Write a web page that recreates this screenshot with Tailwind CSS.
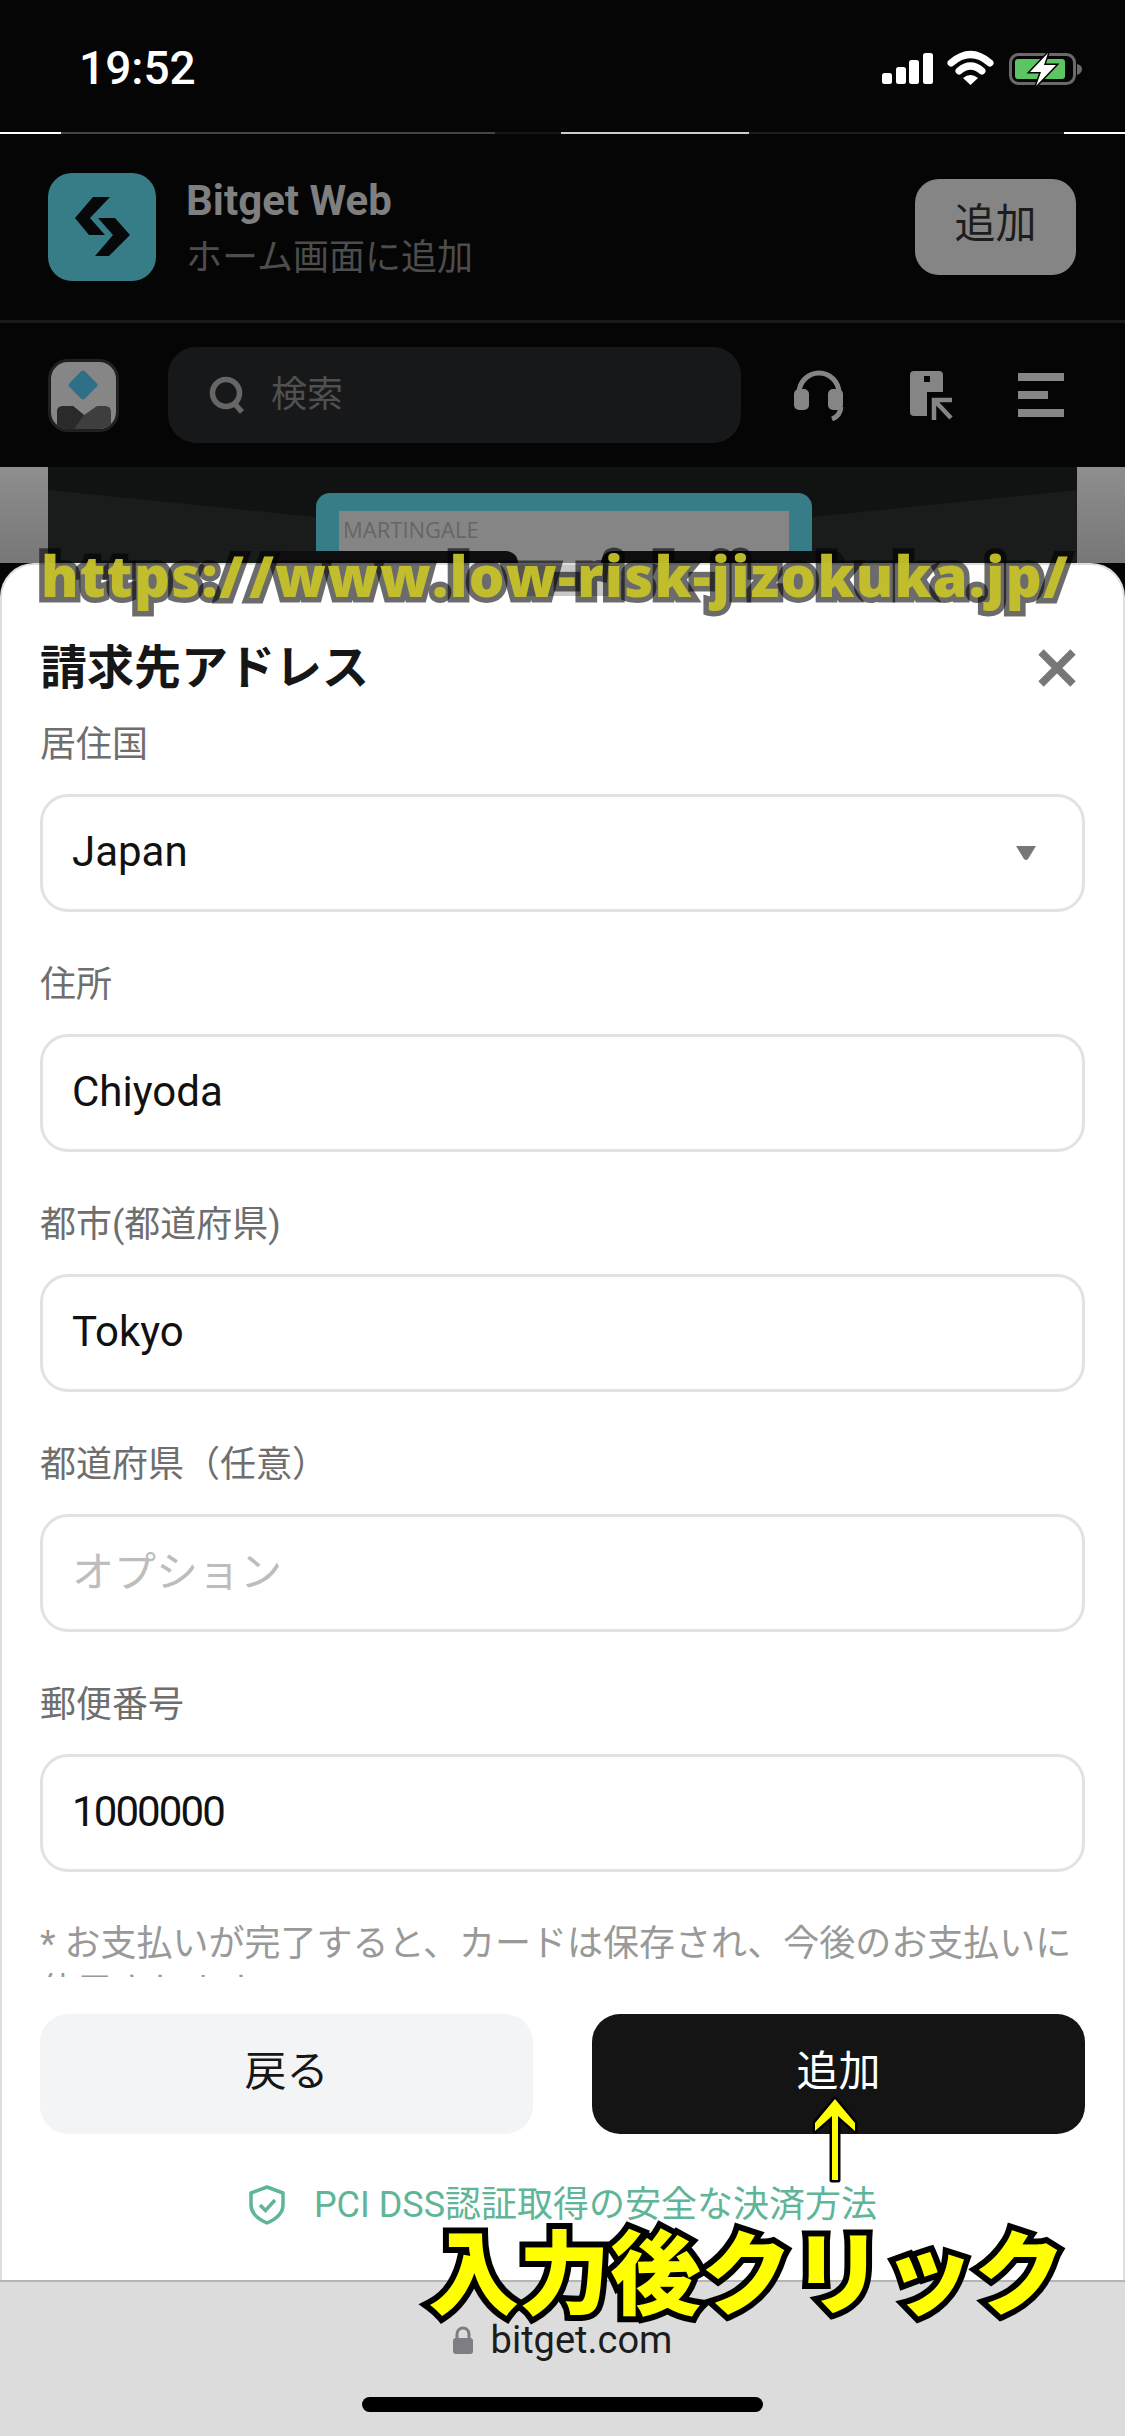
<!DOCTYPE html>
<html lang="ja">
<head>
  <meta charset="UTF-8" />
  <meta name="viewport" content="width=device-width, initial-scale=1.0"/>
  <title>Bitget 請求先アドレス</title>
  <script src="https://cdn.jsdelivr.net/npm/@tailwindcss/browser@4"></script>
</head>
<body class="bg-black">
  <div class="relative w-[1125px] h-[2436px] overflow-hidden bg-[#050505] font-['Roboto','Noto_Sans_CJK_JP',sans-serif]">

    <!-- status bar -->
    <div class="h-[133px] flex justify-between items-start bg-[#050505]">
      <div class="ml-[79px] mt-[42px] text-white text-[46px] leading-[52px] font-medium">19:52</div>
      <svg class="mt-[50px] mr-[43px]" width="202" height="38" viewBox="880 50 202 38">
        <rect x="882" y="73" width="10" height="11" rx="2.5" fill="#fff"/>
        <rect x="896" y="67" width="10" height="17" rx="2.5" fill="#fff"/>
        <rect x="909" y="60" width="10" height="24" rx="2.5" fill="#fff"/>
        <rect x="923" y="53" width="10" height="31" rx="2.5" fill="#fff"/>
        <path d="M951 63 Q970.5 46 990 63" fill="none" stroke="#fff" stroke-width="7" stroke-linecap="round"/>
        <path d="M959 71 Q970.5 61 982 71" fill="none" stroke="#fff" stroke-width="7" stroke-linecap="round"/>
        <path d="M963 78 Q970.5 72 978 78 L970.5 85 Z" fill="#fff"/>
        <rect x="1010.5" y="54.5" width="64" height="29" rx="8" fill="none" stroke="#6a6a6a" stroke-width="3"/>
        <rect x="1015" y="59" width="50" height="20" rx="3" fill="#5cc463"/>
        <path d="M1077 64 Q1082 65 1082 69 Q1082 73 1077 75 Z" fill="#6a6a6a"/>
        <path d="M1048 53 L1030 72 H1041 L1036 86 L1056 65 H1044 Z" fill="#fff" stroke="#050505" stroke-width="3" paint-order="stroke"/>
      </svg>
    </div>

    <!-- thin line under the status bar, broken into bright and dark pieces -->
    <div class="flex h-[2px] absolute top-[132px] left-0 w-full">
      <div class="w-[61px] bg-white"></div>
      <div class="w-[434px] bg-[#444]"></div>
      <div class="w-[66px] bg-[#151515]"></div>
      <div class="w-[188px] bg-[#ccc]"></div>
      <div class="w-[315px] bg-[#1c1c1c]"></div>
      <div class="w-[61px] bg-white"></div>
    </div>

    <!-- add to home banner -->
    <div class="h-[187px] flex items-center justify-between pl-[48px] pr-[49px]">
      <div class="flex items-center gap-[30px]">
        <svg class="w-[108px] h-[108px]" viewBox="0 0 108 108">
          <rect width="108" height="108" rx="24" fill="#377d87"/>
          <path d="M45 24 H62 L42 45 L57 62 H41 L27 45 Z" fill="#06080a"/>
          <path d="M50 45 H67 L82 62 L61 83 H47 L65 62 Z" fill="#06080a"/>
        </svg>
        <div class="flex flex-col pt-[5px]">
          <div class="text-[42px] leading-[52px] font-bold text-[#7f7f7f]">Bitget Web</div>
          <div class="mt-[6px] text-[36px] leading-[50px] text-[#4d4d4d]">ホーム画面に追加</div>
        </div>
      </div>
      <div class="w-[161px] h-[96px] rounded-[24px] bg-[#858585] flex items-center justify-center pb-[4px] text-[41px] text-[#1d1d1d]">追加</div>
    </div>
    <div class="h-[3px] bg-[#1a1a1a]"></div>

    <!-- dimmed nav -->
    <div class="h-[144px] flex items-center pl-[48px]">
      <div class="w-[71px] h-[73px] rounded-[20px] border-[3px] border-[#202020] bg-[#868686] overflow-hidden">
        <svg class="w-full h-full" viewBox="0 0 65 67">
          <rect x="21" y="12" width="22" height="22" rx="3" transform="rotate(45 32 23)" fill="#2f7088"/>
          <path d="M6 50 Q6 44 12 44 H22 L33 53 L46 44 H54 Q60 44 60 50 V67 H6 Z" fill="#3e3e3e"/>
          <path d="M6 50 Q6 44 12 44 H22 L33 53 L23 67 H6 Z" fill="#2a2a2a"/>
        </svg>
      </div>
      <div class="ml-[49px] w-[573px] h-[96px] rounded-[28px] bg-[#17181a] flex items-center pl-[41px]">
        <svg class="w-[36px] h-[38px]" viewBox="0 0 36 38">
          <circle cx="17" cy="17" r="13.5" fill="none" stroke="#666" stroke-width="5.5"/>
          <path d="M25 27 L33 36" stroke="#666" stroke-width="5.5"/>
        </svg>
        <div class="ml-[26px] text-[36px] text-[#505050]">検索</div>
      </div>
      <svg class="ml-[52px] w-[52px] h-[52px]" viewBox="0 0 52 52">
        <path d="M6 24 A20 20 0 0 1 46 24" fill="none" stroke="#858585" stroke-width="5"/>
        <rect x="1" y="20" width="15" height="21" rx="5" fill="#858585"/>
        <rect x="35" y="20" width="15" height="21" rx="5" fill="#858585"/>
        <path d="M48 38 Q47 47 39 50" fill="none" stroke="#858585" stroke-width="5"/>
      </svg>
      <svg class="ml-[65px] w-[44px] h-[50px]" viewBox="0 0 44 50">
        <path d="M4 1 H29 Q33 1 33 5 V22 H17 V46 H4 Q0 46 0 42 V5 Q0 1 4 1 Z" fill="#858585"/>
        <rect x="14" y="6" width="6" height="6" fill="#050505"/>
        <path d="M24 50 V30 H42 M25 31 L41 48" fill="none" stroke="#858585" stroke-width="4.5"/>
      </svg>
      <div class="ml-[64px] flex flex-col gap-[10px]">
        <div class="w-[46px] h-[8px] bg-[#858585]"></div>
        <div class="w-[30px] h-[8px] bg-[#858585]"></div>
        <div class="w-[46px] h-[8px] bg-[#858585]"></div>
      </div>
    </div>

    <!-- dimmed page behind the sheet -->
    <div class="relative h-[96px] px-[48px] bg-gradient-to-b from-[#8e8e8e] to-[#777]">
      <div class="relative h-full bg-[#111212] overflow-hidden">
        <svg class="absolute inset-0" width="1029" height="96" viewBox="0 0 1029 96">
          <path d="M0 23 L268 50 V96 H0 Z" fill="#1a1c1c"/>
          <path d="M1029 23 L764 50 V96 H1029 Z" fill="#1a1c1c"/>
        </svg>
        <div class="absolute left-[268px] top-[26px] w-[496px] h-[70px] bg-[#377d87] rounded-t-[14px] px-[23px] pt-[18px]">
          <div class="h-[60px] bg-[#858585] pl-[4px] pt-[3px] text-[22px] leading-[30px] text-[#666] font-['Open_Sans',sans-serif]">MARTINGALE</div>
        </div>
        <div class="absolute left-[224px] top-[84px] w-[246px] h-[20px] bg-[#0f0f0f] rounded-t-[12px]"></div>
        <div class="absolute left-[553px] top-[84px] w-[244px] h-[20px] bg-[#0f0f0f] rounded-t-[12px]"></div>
      </div>
    </div>

    <!-- billing address sheet -->
    <div class="h-[1717px] bg-white rounded-t-[34px] border-x-[2px] border-t-[2px] border-[#dedede] px-[38px] pt-[73px]">
      <div class="h-[60px] flex items-center justify-between">
        <div class="text-[47px] font-bold text-[#161616]">請求先アドレス</div>
        <svg class="w-[38px] h-[38px] mr-[9px]" viewBox="0 0 38 38">
          <path d="M3 3 L35 35 M35 3 L3 35" stroke="#777" stroke-width="7.5"/>
        </svg>
      </div>

      <div class="mt-[22px] h-[50px] text-[36px] leading-[50px] text-[#6e6e6e]">居住国</div>
      <div class="mt-[24px] h-[118px] rounded-[28px] border-[3px] border-[#e2e2e2] flex items-center justify-between pl-[29px] pr-[46px] text-[42px] text-[#111]">
        <span class="pb-[3px]">Japan</span>
        <svg class="w-[20px] h-[14px]" viewBox="0 0 20 14"><path d="M0 0 H20 L12 13 Q10 15 8 13 Z" fill="#777"/></svg>
      </div>

      <div class="mt-[48px] h-[50px] text-[36px] leading-[50px] text-[#6e6e6e]">住所</div>
      <div class="mt-[24px] h-[118px] rounded-[28px] border-[3px] border-[#e2e2e2] flex items-center pl-[29px] pb-[3px] text-[42px] text-[#111]">Chiyoda</div>

      <div class="mt-[48px] h-[50px] text-[36px] leading-[50px] text-[#6e6e6e]">都市(都道府県)</div>
      <div class="mt-[24px] h-[118px] rounded-[28px] border-[3px] border-[#e2e2e2] flex items-center pl-[29px] pb-[3px] text-[42px] text-[#111]">Tokyo</div>

      <div class="mt-[48px] h-[50px] text-[36px] leading-[50px] text-[#6e6e6e]">都道府県（任意）</div>
      <div class="mt-[24px] h-[118px] rounded-[28px] border-[3px] border-[#e2e2e2] flex items-center pl-[29px] pb-[2px] text-[42px] text-[#bdbdbd]">オプション</div>

      <div class="mt-[48px] h-[50px] text-[36px] leading-[50px] text-[#6e6e6e]">郵便番号</div>
      <div class="mt-[24px] h-[118px] rounded-[28px] border-[3px] border-[#e2e2e2] flex items-center pl-[29px] pb-[3px] text-[42px] tracking-[-1.9px] text-[#111]">1000000</div>

      <div class="mt-[48px] h-[57px] overflow-hidden text-[36px] leading-[48px] text-[#999]">* お支払いが完了すると、カードは保存され、今後のお支払いに使用されます</div>

      <div class="mt-[37px] flex justify-between">
        <div class="w-[493px] h-[120px] rounded-[28px] bg-[#f3f4f6] flex items-center justify-center pb-[6px] text-[42px] text-[#161616]">戻る</div>
        <div class="w-[493px] h-[120px] rounded-[28px] bg-[#141414] flex items-center justify-center pb-[6px] text-[42px] text-white">追加</div>
      </div>

      <div class="mt-[46px] h-[50px] flex items-center justify-center gap-[28px] text-[36px] text-[#5fb597]">
        <svg class="w-[38px] h-[40px]" viewBox="0 0 38 40">
          <path d="M19 2 L35 8 V20 Q35 31 19 38 Q3 31 3 20 V8 Z" fill="none" stroke="#5fb597" stroke-width="3.5" stroke-linejoin="round"/>
          <path d="M12 20 L17.5 25.5 L27 15" fill="none" stroke="#5fb597" stroke-width="3.5"/>
        </svg>
        <span>PCI DSS認証取得の安全な決済方法</span>
      </div>
    </div>

    <!-- browser bar -->
    <div class="absolute left-0 right-0 top-[2280px] h-[156px] border-t-[2px] border-[#b5b5b5] bg-[#dcdcdc]">
      <div class="mt-[36px] h-[44px] flex items-center justify-center gap-[18px] text-[38px] text-[#1c1c1c]">
        <svg class="w-[20px] h-[28px]" viewBox="0 0 20 28">
          <path d="M4 13 V8 A6 6 0 0 1 16 8 V13" fill="none" stroke="#7d7d82" stroke-width="3"/>
          <rect y="12" width="20" height="16" rx="3" fill="#7d7d82"/>
        </svg>
        <span>bitget.com</span>
      </div>
      <div class="mx-auto mt-[35px] w-[401px] h-[15px] rounded-full bg-black"></div>
    </div>

    <!-- stray strip left by the screenshot, sits over the sheet -->
    <div class="absolute left-[518px] top-[565px] w-[100px] h-[31px] bg-[#c8c8c8]"></div>

    <!-- annotations pasted on top of the screenshot -->
    <div class="absolute left-[41px] top-[535px] whitespace-nowrap text-[56px] leading-[80px] tracking-[1.3px] font-extrabold font-['Open_Sans',sans-serif] text-[#c6c22a]/95 [-webkit-text-stroke:11px_rgba(0,0,0,0.58)] [paint-order:stroke_fill]">https:/<span class="ml-[4px]">/www.low-risk-jizokuka.jp/</span></div>

    <svg class="absolute left-[810px] top-[2092px]" width="50" height="96" viewBox="0 0 50 96">
      <path d="M25 7 L45 31 V39 L28 24 V88 H22 V24 L5 39 V31 Z" fill="#ffff00" stroke="#000" stroke-width="5" stroke-linejoin="round" paint-order="stroke"/>
    </svg>

    <div class="absolute left-[428px] top-[2212px] whitespace-nowrap text-[91px] leading-[110px] font-black font-['Noto_Sans_CJK_JP',sans-serif] text-[#ffff00] [-webkit-text-stroke:12px_#000] [paint-order:stroke_fill]">入力後クリック</div>
  </div>
</body>
</html>
